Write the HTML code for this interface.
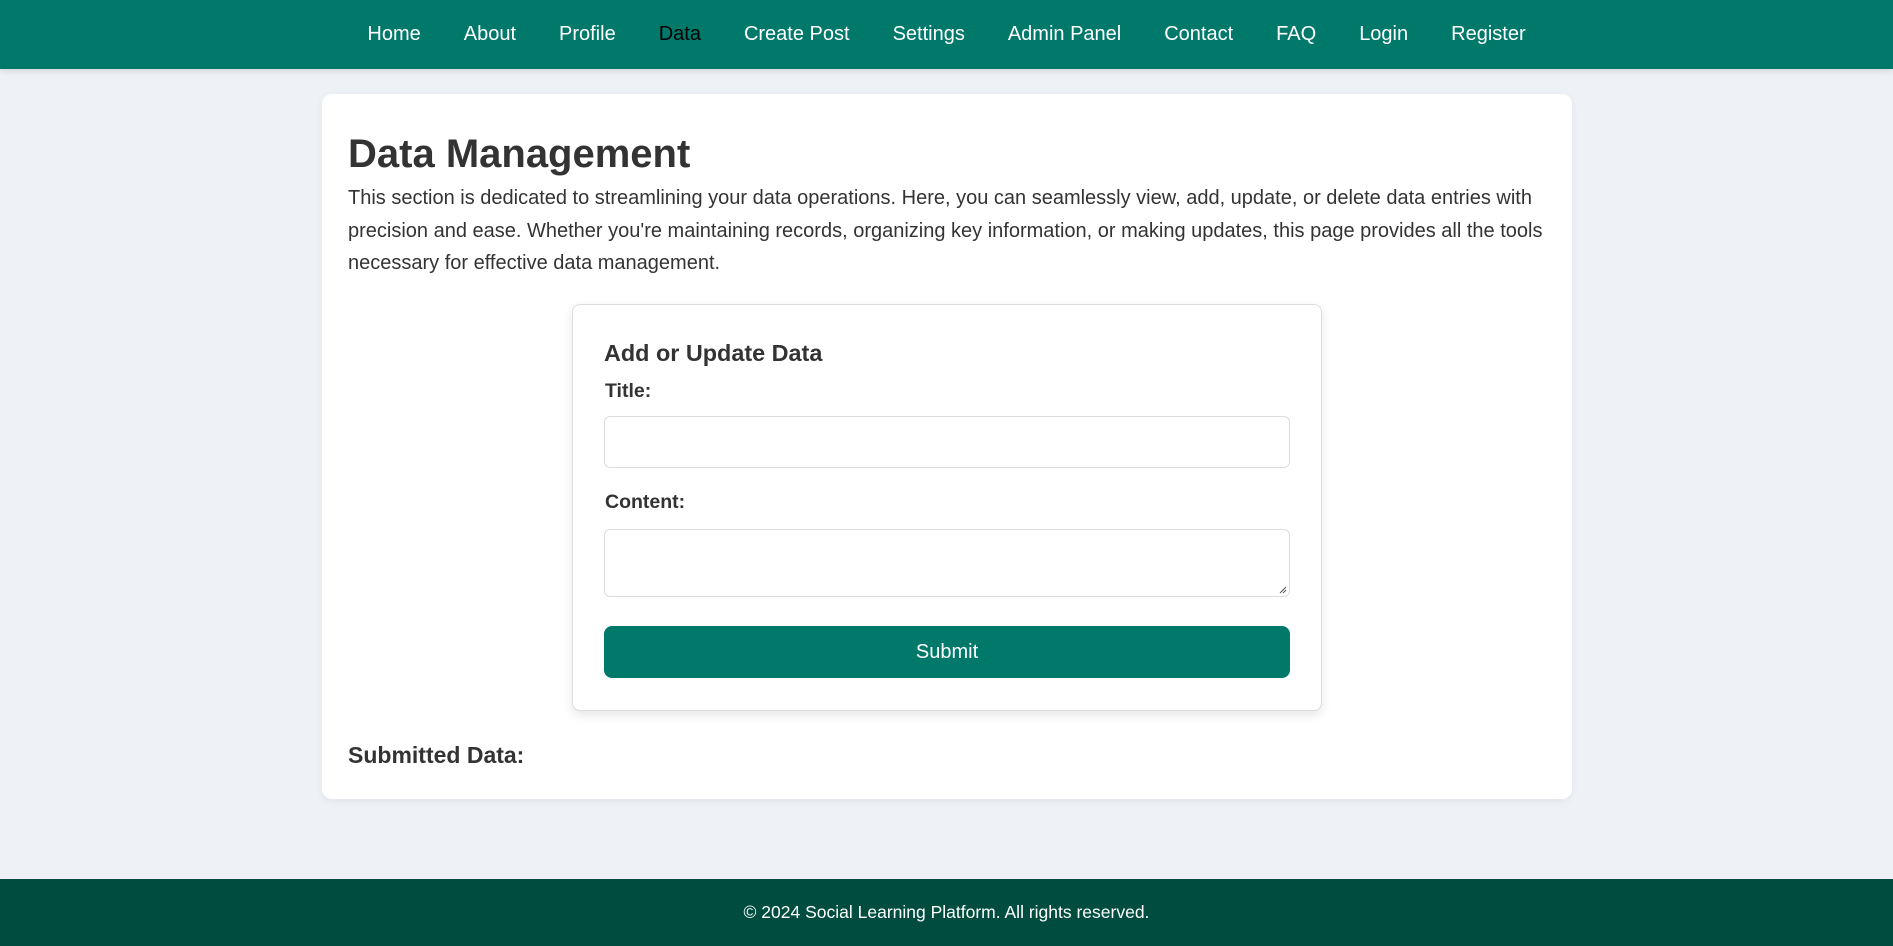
<!DOCTYPE html>
<html><head><meta charset="utf-8"><style>
*{box-sizing:border-box;margin:0;padding:0}
body{width:1893px;height:946px;background:#eef2f6;font-family:"Liberation Sans",Arial,sans-serif;color:#333;position:relative;overflow:hidden}
nav{position:absolute;left:0;top:0;width:1893px;height:69px;background:#00796b;box-shadow:0 2px 6px rgba(0,0,0,.12);display:flex;justify-content:center;align-items:center}
nav a{color:#fff;text-decoration:none;font-size:20px;padding:0 21.5px}
nav a.act{color:#000}
.main{position:absolute;left:322px;top:94px;width:1250px;height:705px;background:#fff;border-radius:10px;box-shadow:0 2px 8px rgba(0,0,0,.06)}
h1{position:absolute;left:26px;top:38px;font-size:40px;font-weight:bold;color:#333}
.p{position:absolute;left:26px;top:88px;font-size:20px;line-height:32.6px;white-space:nowrap}
.card{position:absolute;left:250px;top:210px;width:750px;height:407px;border:1px solid #ddd;border-radius:8px;box-shadow:0 4px 10px rgba(0,0,0,.1);background:#fff}
.card h3{position:absolute;left:31px;top:35px;font-size:23.4px;font-weight:bold}
.lab{position:absolute;left:32px;font-size:19.5px;font-weight:bold}
.in{position:absolute;left:31px;width:686px;border:1px solid #ddd;border-radius:6px}
.btn{position:absolute;left:31px;top:321px;width:686px;height:52px;background:#00796b;border-radius:8px;color:#fff;font-size:20px;text-align:center;line-height:52px}
h4{position:absolute;left:26px;top:648px;font-size:23px;font-weight:bold}
footer{position:absolute;left:0;top:879px;width:1893px;height:67px;background:#004d40;color:#fff;font-size:17.5px;text-align:center;line-height:66px}
</style></head><body>
<nav><a>Home</a><a>About</a><a>Profile</a><a class="act">Data</a><a>Create Post</a><a>Settings</a><a>Admin Panel</a><a>Contact</a><a>FAQ</a><a>Login</a><a>Register</a></nav>
<div class="main">
<h1>Data Management</h1>
<div class="p">This section is dedicated to streamlining your data operations. Here, you can seamlessly view, add, update, or delete data entries with<br>precision and ease. Whether you're maintaining records, organizing key information, or making updates, this page provides all the tools<br>necessary for effective data management.</div>
<div class="card">
<h3>Add or Update Data</h3>
<div class="lab" style="top:75px">Title:</div>
<div class="in" style="top:111px;height:52px"></div>
<div class="lab" style="top:186px">Content:</div>
<div class="in" style="top:224px;height:68px"><svg style="position:absolute;right:2px;bottom:2px" width="8" height="8"><path d="M1 7L7 1M4 7L7 4" stroke="#555" stroke-width="1"/></svg></div>
<div class="btn">Submit</div>
</div>
<h4>Submitted Data:</h4>
</div>
<footer>© 2024 Social Learning Platform. All rights reserved.</footer>
</body></html>
